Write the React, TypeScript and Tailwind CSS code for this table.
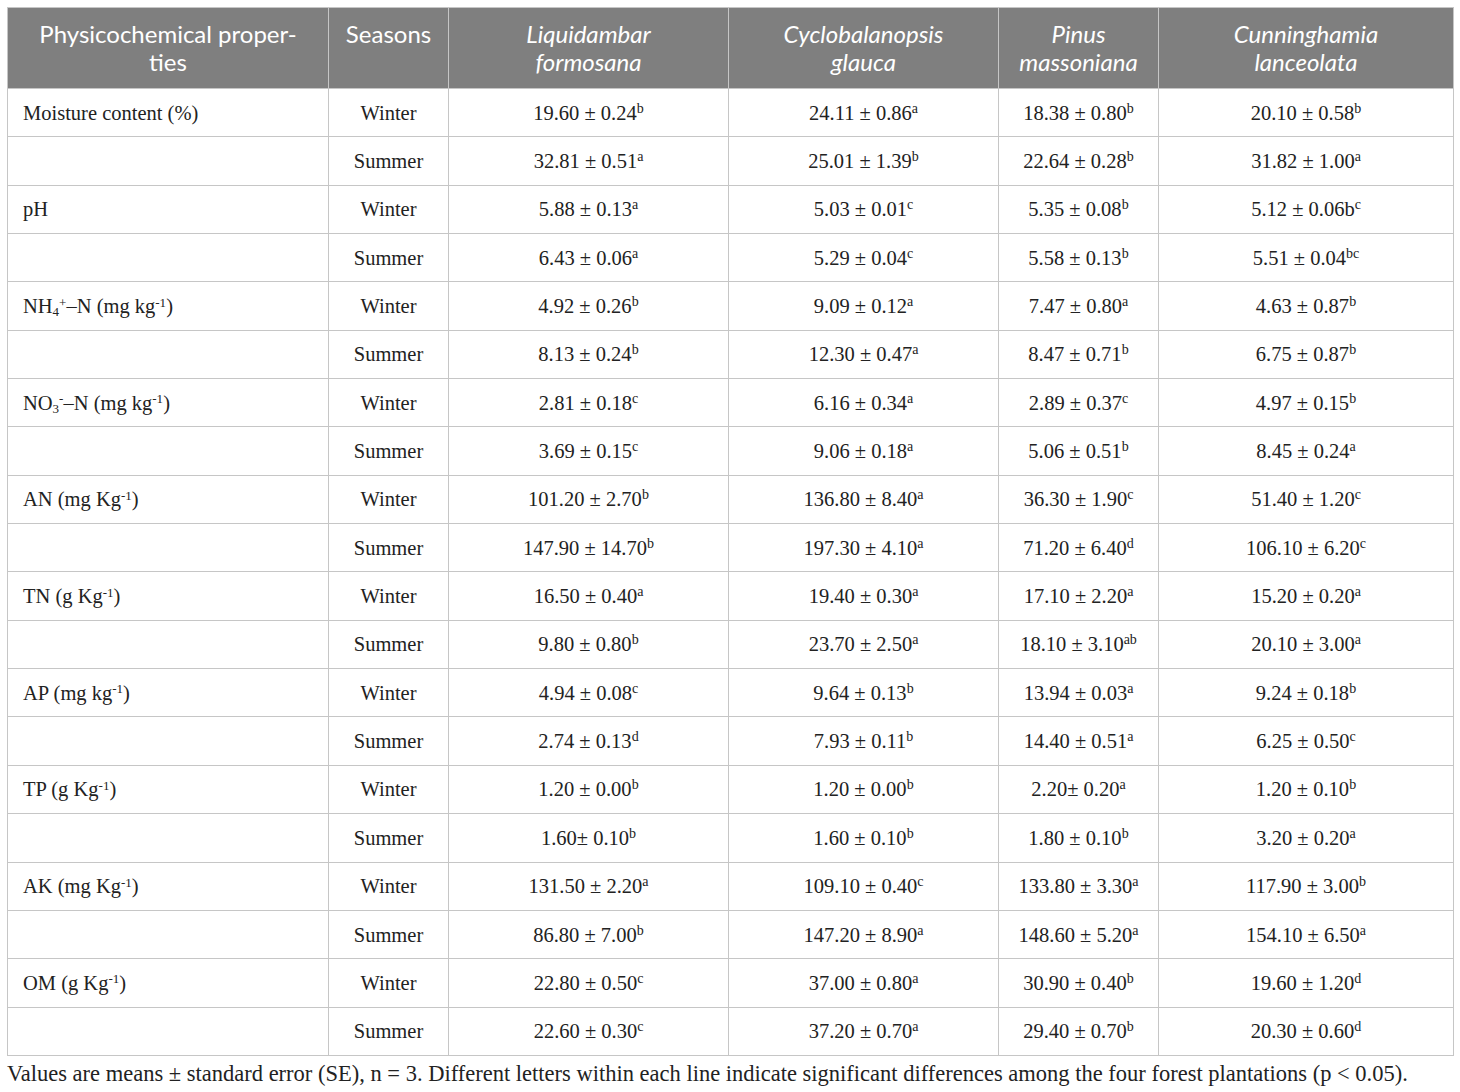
import React from "react";

const rows: { label: React.ReactNode; w: string[]; s: string[] }[] = [
  {
    label: "Moisture content (%)",
    w: ["19.60 ± 0.24|b", "24.11 ± 0.86|a", "18.38 ± 0.80|b", "20.10 ± 0.58|b"],
    s: ["32.81 ± 0.51|a", "25.01 ± 1.39|b", "22.64 ± 0.28|b", "31.82 ± 1.00|a"],
  },
  {
    label: "pH",
    w: ["5.88 ± 0.13|a", "5.03 ± 0.01|c", "5.35 ± 0.08|b", "5.12 ± 0.06b|c"],
    s: ["6.43 ± 0.06|a", "5.29 ± 0.04|c", "5.58 ± 0.13|b", "5.51 ± 0.04|bc"],
  },
  {
    label: (
      <>
        NH<sub className="text-[13px]">4</sub>
        <sup className="text-[13px]">+</sup>–N (mg kg<sup className="text-[13px]">-1</sup>)
      </>
    ),
    w: ["4.92 ± 0.26|b", "9.09 ± 0.12|a", "7.47 ± 0.80|a", "4.63 ± 0.87|b"],
    s: ["8.13 ± 0.24|b", "12.30 ± 0.47|a", "8.47 ± 0.71|b", "6.75 ± 0.87|b"],
  },
  {
    label: (
      <>
        NO<sub className="text-[13px]">3</sub>
        <sup className="text-[13px]">-</sup>–N (mg kg<sup className="text-[13px]">-1</sup>)
      </>
    ),
    w: ["2.81 ± 0.18|c", "6.16 ± 0.34|a", "2.89 ± 0.37|c", "4.97 ± 0.15|b"],
    s: ["3.69 ± 0.15|c", "9.06 ± 0.18|a", "5.06 ± 0.51|b", "8.45 ± 0.24|a"],
  },
  {
    label: (
      <>
        AN (mg Kg<sup className="text-[13px]">-1</sup>)
      </>
    ),
    w: ["101.20 ± 2.70|b", "136.80 ± 8.40|a", "36.30 ± 1.90|c", "51.40 ± 1.20|c"],
    s: ["147.90 ± 14.70|b", "197.30 ± 4.10|a", "71.20 ± 6.40|d", "106.10 ± 6.20|c"],
  },
  {
    label: (
      <>
        TN (g Kg<sup className="text-[13px]">-1</sup>)
      </>
    ),
    w: ["16.50 ± 0.40|a", "19.40 ± 0.30|a", "17.10 ± 2.20|a", "15.20 ± 0.20|a"],
    s: ["9.80 ± 0.80|b", "23.70 ± 2.50|a", "18.10 ± 3.10|ab", "20.10 ± 3.00|a"],
  },
  {
    label: (
      <>
        AP (mg kg<sup className="text-[13px]">-1</sup>)
      </>
    ),
    w: ["4.94 ± 0.08|c", "9.64 ± 0.13|b", "13.94 ± 0.03|a", "9.24 ± 0.18|b"],
    s: ["2.74 ± 0.13|d", "7.93 ± 0.11|b", "14.40 ± 0.51|a", "6.25 ± 0.50|c"],
  },
  {
    label: (
      <>
        TP (g Kg<sup className="text-[13px]">-1</sup>)
      </>
    ),
    w: ["1.20 ± 0.00|b", "1.20 ± 0.00|b", "2.20± 0.20|a", "1.20 ± 0.10|b"],
    s: ["1.60± 0.10|b", "1.60 ± 0.10|b", "1.80 ± 0.10|b", "3.20 ± 0.20|a"],
  },
  {
    label: (
      <>
        AK (mg Kg<sup className="text-[13px]">-1</sup>)
      </>
    ),
    w: ["131.50 ± 2.20|a", "109.10 ± 0.40|c", "133.80 ± 3.30|a", "117.90 ± 3.00|b"],
    s: ["86.80 ± 7.00|b", "147.20 ± 8.90|a", "148.60 ± 5.20|a", "154.10 ± 6.50|a"],
  },
  {
    label: (
      <>
        OM (g Kg<sup className="text-[13px]">-1</sup>)
      </>
    ),
    w: ["22.80 ± 0.50|c", "37.00 ± 0.80|a", "30.90 ± 0.40|b", "19.60 ± 1.20|d"],
    s: ["22.60 ± 0.30|c", "37.20 ± 0.70|a", "29.40 ± 0.70|b", "20.30 ± 0.60|d"],
  },
];

function Val({ v }: { v: string }) {
  const [a, b] = v.split("|");
  return (
    <>
      {a}
      <sup className="text-[14px]">{b}</sup>
    </>
  );
}

const td = "border border-[#c6c6c6] h-[48.35px] p-0 align-middle";
const th =
  "border border-[#c6c6c6] bg-[#7f7f7f] text-white font-normal text-[24px] leading-[28px] text-center align-middle p-0";

export default function App() {
  return (
    <div className="bg-white min-h-[1092px] w-[1460px] pt-[7px] pl-[7px] text-[#222]">
      <table
        className="border-collapse table-fixed w-[1446px]"
        style={{ fontFamily: '"Liberation Serif", serif' }}
      >
        <colgroup>
          <col className="w-[321px]" />
          <col className="w-[120px]" />
          <col className="w-[280px]" />
          <col className="w-[270px]" />
          <col className="w-[160px]" />
          <col className="w-[295px]" />
        </colgroup>
        <thead style={{ fontFamily: "Lato, sans-serif" }}>
          <tr className="h-[81px]">
            <th className={th}>
              Physicochemical proper-
              <br />
              ties
            </th>
            <th className={th + " align-top pt-[12px]"}>Seasons</th>
            <th className={th}>
              <i>
                Liquidambar
                <br />
                formosana
              </i>
            </th>
            <th className={th}>
              <i>
                Cyclobalanopsis
                <br />
                glauca
              </i>
            </th>
            <th className={th}>
              <i>
                Pinus
                <br />
                massoniana
              </i>
            </th>
            <th className={th}>
              <i>
                Cunninghamia
                <br />
                lanceolata
              </i>
            </th>
          </tr>
        </thead>
        <tbody className="text-[20.5px] leading-[24px]">
          {rows.map((r, i) => (
            <React.Fragment key={i}>
              <tr>
                <td className={td + " pl-[15px]"}>{r.label}</td>
                <td className={td + " text-center"}>Winter</td>
                {r.w.map((v, j) => (
                  <td key={j} className={td + " text-center"}>
                    <Val v={v} />
                  </td>
                ))}
              </tr>
              <tr>
                <td className={td}></td>
                <td className={td + " text-center"}>Summer</td>
                {r.s.map((v, j) => (
                  <td key={j} className={td + " text-center"}>
                    <Val v={v} />
                  </td>
                ))}
              </tr>
            </React.Fragment>
          ))}
        </tbody>
      </table>
      <p
        className="text-[22.5px] leading-[24px] mt-[6px] whitespace-nowrap"
        style={{ fontFamily: '"Liberation Serif", serif' }}
      >
        Values are means ± standard error (SE), n = 3. Different letters within each line indicate significant differences among the four forest plantations (p &lt; 0.05).
      </p>
    </div>
  );
}
